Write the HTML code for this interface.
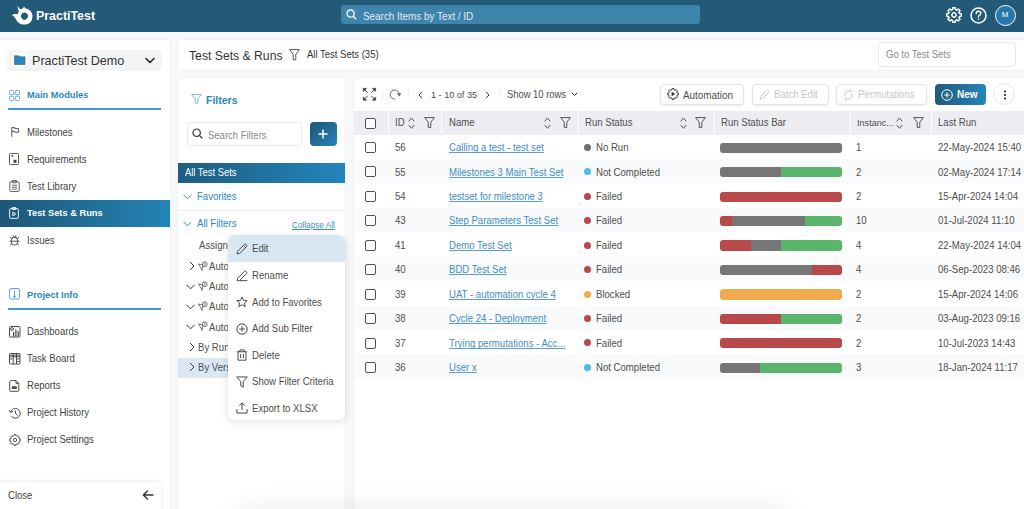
<!DOCTYPE html>
<html><head><meta charset="utf-8">
<style>
*{box-sizing:border-box;margin:0;padding:0}
html,body{width:1024px;height:509px;overflow:hidden}
body{background:#f7f8fa;font-family:"Liberation Sans",sans-serif;font-size:10.27px;color:#4e4e4e;position:relative}
.a{position:absolute}
.t{position:absolute;white-space:nowrap;line-height:12px;transform:scaleX(0.9346);transform-origin:0 50%}
svg{position:absolute;overflow:visible}
#hdr{left:0;top:0;width:1024px;height:32px;background:#235a78}
#side{left:0;top:39.5px;width:170px;height:470px;background:#fff;border-top-right-radius:4px;box-shadow:0 0 0 1px #eff1f4}
#titlecard{left:178px;top:39.5px;width:850px;height:30.5px;background:#fff;border-radius:4px;box-shadow:0 0 0 1px #eff1f4}
#fpanel{left:178px;top:78px;width:167px;height:440px;background:#fff;border-radius:4px;box-shadow:0 0 0 1px #eff1f4}
#tpanel{left:353.5px;top:77.5px;width:680px;height:440px;background:#fff;border-radius:4px;box-shadow:0 0 0 1px #eff1f4}
.nav{color:#434343;font-size:10.22px}
.blue{color:#2b86c0}
.hdrrow{left:354px;top:110.5px;width:670px;height:24px;background:#eceef2}
.sep{position:absolute;top:110.5px;width:1px;height:24px;background:#fff}
.row{position:absolute;left:354px;width:670px;height:24.5px}
.cb{position:absolute;width:11px;height:11px;border:1.4px solid #505050;border-radius:2px;background:#fff}
.link{color:#3f8ec6;text-decoration:underline;text-decoration-thickness:1px;text-underline-offset:1px;text-decoration-color:#5a9fd2;text-decoration-skip-ink:none}
.bar{position:absolute;left:720px;width:122px;height:10.2px;border-radius:3px;overflow:hidden;display:flex}
.g{background:#767676}.r{background:#b8484a}.gr{background:#5bb46c}.o{background:#f1aa4d}
.dot{position:absolute;width:7px;height:7px;border-radius:50%}
.btn{position:absolute;top:84px;height:20.6px;border:1px solid #e2e4e8;border-radius:4px;background:#fff;box-shadow:0 1px 2px rgba(0,0,0,.08)}
.menu{left:228px;top:235px;width:117px;height:185px;background:#fff;border-radius:7px;box-shadow:0 2px 8px rgba(0,0,0,.12)}
</style></head><body>

<!-- HEADER -->
<div id="hdr" class="a"></div>
<!-- logo -->
<svg style="left:8px;top:2px" width="32" height="28" viewBox="0 0 32 28">
  <path fill="#fff" fill-rule="evenodd" d="M24.5 14 A7.5 7.5 0 1 1 24.5 13.9 Z M20.1 14 A3.6 3.6 0 1 0 20.1 14.1 Z"/>
  <path fill="#fff" d="M3.8 13.3 C6 11.6 9 11.8 11 13.4 L13 16.3 C14.2 18.3 17 19.4 20 18.5 L24.2 16.5 C23.6 20.2 20.5 22.6 16 22.6 C11.5 22.6 9 19.5 7.4 16.5 C6.5 14.8 5.3 13.9 3.8 13.3 Z"/>
  <path fill="#fff" d="M9.3 4.1 L12.3 7.2 L14.8 6.6 L16 4.4 L17.5 6.8 L18.5 8 L11 10.5 Z"/>
</svg>
<div class="t" style="left:36px;top:8px;font-size:13.27px;font-weight:700;color:#fff;line-height:15px">PractiTest</div>
<!-- search -->
<div class="a" style="left:341px;top:5px;width:359px;height:19px;background:#3e84ab;border-radius:3px"></div>
<svg style="left:345.7px;top:9px" width="11" height="11" viewBox="0 0 11 11"><circle cx="4.6" cy="4.6" r="3.6" fill="none" stroke="#fff" stroke-width="1.3"/><path d="M7.2 7.2 L9.8 9.8" stroke="#fff" stroke-width="1.4" stroke-linecap="round"/></svg>
<div class="t" style="left:362.5px;top:10px;color:#e3edf4;font-size:10.59px">Search Items by Text / ID</div>
<!-- right icons -->
<svg style="left:945px;top:6px" width="18" height="18" viewBox="0 0 18 18">
  <g transform="translate(9 9) scale(0.97)" fill="none" stroke="#fff" stroke-width="1.55" stroke-linejoin="round">
   <path d="M-2.22 -5.36 L-1.50 -5.60 L-1.32 -7.48 L1.32 -7.48 L1.50 -5.60 L2.22 -5.36 L2.90 -5.02 L4.36 -6.23 L6.23 -4.36 L5.02 -2.90 L5.36 -2.22 L5.60 -1.50 L7.48 -1.32 L7.48 1.32 L5.60 1.50 L5.36 2.22 L5.02 2.90 L6.23 4.36 L4.36 6.23 L2.90 5.02 L2.22 5.36 L1.50 5.60 L1.32 7.48 L-1.32 7.48 L-1.50 5.60 L-2.22 5.36 L-2.90 5.02 L-4.36 6.23 L-6.23 4.36 L-5.02 2.90 L-5.36 2.22 L-5.60 1.50 L-7.48 1.32 L-7.48 -1.32 L-5.60 -1.50 L-5.36 -2.22 L-5.02 -2.90 L-6.23 -4.36 L-4.36 -6.23 L-2.90 -5.02 Z"/>
   <circle cx="0" cy="0" r="2.2"/>
  </g>
</svg>
<svg style="left:970px;top:6.5px" width="17" height="17" viewBox="0 0 17 17">
  <circle cx="8.5" cy="8.5" r="7.5" fill="none" stroke="#fff" stroke-width="1.6"/>
  <path d="M6.2 6.6 Q6.2 4.3 8.5 4.3 Q10.8 4.3 10.8 6.4 Q10.8 7.8 9.3 8.4 Q8.5 8.8 8.5 10" fill="none" stroke="#fff" stroke-width="1.4" stroke-linecap="round"/>
  <circle cx="8.5" cy="12.3" r="0.8" fill="#fff"/>
</svg>
<div class="a" style="left:994.5px;top:4.5px;width:21px;height:21px;border-radius:50%;background:#2777a8;border:1.8px solid #fff"></div>
<div class="a" style="left:994.5px;top:10px;width:21px;text-align:center;color:#fff;font-size:7.92px;line-height:10px;font-weight:400">M</div>

<!-- SIDEBAR -->
<div id="side" class="a"></div>
<div class="a" style="left:7.3px;top:50px;width:154.5px;height:20.5px;background:#f3f4f6;border-radius:4px"></div>
<div class="a" style="left:11.5px;top:52.2px;width:16px;height:16px;background:#fff;border-radius:50%"></div>
<svg style="left:14px;top:55px" width="11.5" height="10" viewBox="0 0 11.5 10"><path d="M0.5 0.8 L4.5 0.8 L5.5 1.8 L11 1.8 L11 9.5 L0.5 9.5 Z" fill="#2e84be" stroke="#1f5d85" stroke-width="0.6"/></svg>
<div class="t" style="left:32px;top:53px;font-size:13.48px;line-height:15px;color:#333">PractiTest Demo</div>
<svg style="left:145px;top:57.3px" width="10" height="7" viewBox="0 0 10 7"><path d="M1 1.5 L5 5.5 L9 1.5" fill="none" stroke="#222" stroke-width="1.5" stroke-linecap="round" stroke-linejoin="round"/></svg>

<!-- main modules -->
<svg style="left:8.8px;top:90px" width="11" height="11" viewBox="0 0 11 11" fill="none" stroke="#5aa3d6" stroke-width="0.9"><rect x="0.5" y="0.5" width="4.2" height="4.2" rx="0.9"/><rect x="6.3" y="0.5" width="4.2" height="4.2" rx="0.9"/><rect x="0.5" y="6.3" width="4.2" height="4.2" rx="0.9"/><rect x="6.3" y="6.3" width="4.2" height="4.2" rx="0.9"/></svg>
<div class="t blue" style="left:26.5px;top:89px;font-size:9.95px;font-weight:700">Main Modules</div>
<div class="a" style="left:8px;top:108px;width:153px;height:2px;background:#4096d0"></div>

<div id="navitems"></div>
<!-- nav items -->
<svg style="left:10.5px;top:127px" width="9" height="10" viewBox="0 0 9 10" fill="none" stroke="#444" stroke-width="0.9" stroke-linejoin="round"><path d="M0.8 9.8 V0.6 H3.8 V1.6 H7.6 V5.2 H3.8 V4.4 H0.8"/></svg>
<div class="t nav" style="left:26.5px;top:127px">Milestones</div>
<svg style="left:9px;top:153px" width="10" height="12" viewBox="0 0 10 12" fill="none" stroke="#444" stroke-width="0.9"><rect x="0.5" y="0.5" width="9" height="11" rx="1"/><rect x="2.3" y="2.2" width="2" height="1.4" fill="#444" stroke="none"/><path d="M4.5 9.8 V6.8 H7.5 V9.8 Z" fill="#444" stroke="none"/></svg>
<div class="t nav" style="left:26.5px;top:154px">Requirements</div>
<svg style="left:9px;top:180px" width="11" height="12" viewBox="0 0 11 12" fill="none" stroke="#555" stroke-width="0.9"><rect x="0.8" y="1.8" width="9.4" height="9.7" rx="1.2"/><rect x="3.3" y="0.5" width="4.4" height="2.3" rx="0.6"/><path d="M2.8 5.2 H8.2 M2.8 7.2 H8.2 M2.8 9.2 H8.2"/></svg>
<div class="t nav" style="left:26.5px;top:181px">Test Library</div>

<!-- active -->
<div class="a" style="left:0;top:199.5px;width:170px;height:27px;background:linear-gradient(90deg,#1e5778 0%,#2583b6 100%)"></div>
<svg style="left:9px;top:207px" width="10" height="12" viewBox="0 0 10 12" fill="none" stroke="#fff" stroke-width="0.9"><rect x="0.6" y="1.6" width="8.8" height="9.8" rx="1.2"/><rect x="3" y="0.5" width="4" height="2" rx="0.5"/><path d="M3.8 5.2 L6.8 7 L3.8 8.8 Z"/></svg>
<div class="t" style="left:26.5px;top:207px;color:#fff;font-weight:700;font-size:9.95px">Test Sets &amp; Runs</div>

<svg style="left:9px;top:234px" width="11" height="12" viewBox="0 0 11 12" fill="none" stroke="#444" stroke-width="0.9"><ellipse cx="5.5" cy="7.2" rx="3.3" ry="4"/><path d="M3.2 3.8 Q5.5 1.8 7.8 3.8 M2.2 7.2 H0.5 M8.8 7.2 H10.5 M2.5 4.5 L0.8 3 M8.5 4.5 L10.2 3 M2.5 10 L0.8 11.3 M8.5 10 L10.2 11.3 M4 1.2 L4.6 2.6 M7 1.2 L6.4 2.6 M2.2 7.2 H8.8"/></svg>
<div class="t nav" style="left:26.5px;top:235px">Issues</div>

<!-- project info -->
<svg style="left:9.2px;top:288px" width="11" height="11.5" viewBox="0 0 11 11.5" fill="none" stroke="#5aa3d6" stroke-width="0.95"><rect x="0.5" y="0.5" width="10" height="10.5" rx="1.5"/><path d="M5.5 2.6 V7.6" stroke-width="1"/><circle cx="5.5" cy="8.6" r="0.9" fill="#5aa3d6"/></svg>
<div class="t blue" style="left:26.5px;top:288.5px;font-size:9.95px;font-weight:700">Project Info</div>
<div class="a" style="left:8px;top:307.5px;width:153px;height:2px;background:#4096d0"></div>

<svg style="left:8.8px;top:325.8px" width="11.5" height="11.5" viewBox="0 0 11.5 11.5" fill="none" stroke="#444" stroke-width="0.95"><rect x="0.5" y="0.5" width="10.5" height="10.5" rx="1"/><circle cx="3" cy="3" r="1.4"/><path d="M4.6 10.5 V6 M6.9 10.5 V3.6 M9.2 10.5 V5" stroke-width="1.2"/></svg>
<div class="t nav" style="left:26.5px;top:325.5px">Dashboards</div>
<svg style="left:8.8px;top:353px" width="11.5" height="11.5" viewBox="0 0 11.5 11.5" fill="none" stroke="#444" stroke-width="0.95"><rect x="0.5" y="0.5" width="10.5" height="10.5" rx="1"/><path d="M0.5 2.2 H11 M0.5 3.8 H11 M4.2 0.5 V11 M7.5 0.5 V11 M8.2 6 H10.4 M8.2 8.5 H10.4 M1.2 6 H3.4" /></svg>
<div class="t nav" style="left:26.5px;top:352.5px">Task Board</div>
<svg style="left:9.3px;top:379.8px" width="11" height="12" viewBox="0 0 11 12" fill="none" stroke="#444" stroke-width="0.95" stroke-linejoin="round"><path d="M1.6 0.6 H7 L9.8 3.4 V10.4 Q9.8 11.3 8.9 11.3 H1.6 Q0.7 11.3 0.7 10.4 V1.5 Q0.7 0.6 1.6 0.6 Z"/><path d="M7 0.6 V3.4 H9.8"/><rect x="2.8" y="6.2" width="5" height="2.8" fill="#555" stroke="none"/></svg>
<div class="t nav" style="left:26.5px;top:379.5px">Reports</div>
<svg style="left:8.8px;top:407.6px" width="12" height="11" viewBox="0 0 12 11" fill="none" stroke="#444" stroke-width="0.95" stroke-linecap="round"><path d="M1.6 4 A4.9 4.9 0 1 1 2.4 8.3"/><path d="M0.4 2.4 L1.5 4.3 L3.5 3.5" stroke-linejoin="round"/><path d="M6.5 2.8 V5.6 L8.4 7.2"/></svg>
<div class="t nav" style="left:26.5px;top:406.5px">Project History</div>
<svg style="left:9px;top:433.5px" width="12" height="12" viewBox="0 0 12 12"><g transform="translate(6 6) scale(0.72)" fill="none" stroke="#444" stroke-width="1.25" stroke-linejoin="round"><path d="M-2.22 -5.36 L-1.50 -5.60 L-1.32 -7.48 L1.32 -7.48 L1.50 -5.60 L2.22 -5.36 L2.90 -5.02 L4.36 -6.23 L6.23 -4.36 L5.02 -2.90 L5.36 -2.22 L5.60 -1.50 L7.48 -1.32 L7.48 1.32 L5.60 1.50 L5.36 2.22 L5.02 2.90 L6.23 4.36 L4.36 6.23 L2.90 5.02 L2.22 5.36 L1.50 5.60 L1.32 7.48 L-1.32 7.48 L-1.50 5.60 L-2.22 5.36 L-2.90 5.02 L-4.36 6.23 L-6.23 4.36 L-5.02 2.90 L-5.36 2.22 L-5.60 1.50 L-7.48 1.32 L-7.48 -1.32 L-5.60 -1.50 L-5.36 -2.22 L-5.02 -2.90 L-6.23 -4.36 L-4.36 -6.23 L-2.90 -5.02 Z"/><circle r="2.3"/></g></svg>
<div class="t nav" style="left:26.5px;top:433.5px">Project Settings</div>

<!-- close -->
<div class="a" style="left:-5px;top:482px;width:166px;height:35px;background:#fff;border-radius:5px;box-shadow:0 0 4px rgba(0,0,0,.12)"></div>
<div class="t nav" style="left:8px;top:490px">Close</div>
<svg style="left:141.5px;top:489.5px" width="12" height="10" viewBox="0 0 12 10" fill="none" stroke="#333" stroke-width="1.4" stroke-linecap="round" stroke-linejoin="round"><path d="M11 5 H1.5 M5.5 1 L1.3 5 L5.5 9"/></svg>

<!-- TITLE CARD -->
<div id="titlecard" class="a"></div>
<div class="t" style="left:188.5px;top:47.5px;font-size:13.05px;line-height:15px;color:#333">Test Sets &amp; Runs</div>
<svg style="left:289px;top:48.6px" width="11" height="11.5" viewBox="0 0 11 11.5" fill="none" stroke="#4a4a4a" stroke-width="0.95" stroke-linejoin="round"><path d="M0.5 0.6 H10.5 L6.8 5.3 V10.8 H4.2 V5.3 Z"/></svg>
<div class="t" style="left:307px;top:49px;font-size:10.17px;color:#333">All Test Sets (35)</div>
<div class="a" style="left:877.5px;top:42px;width:138px;height:24.5px;background:#fff;border:1px solid #e6e8ec;border-radius:4px"></div>
<div class="t" style="left:885.5px;top:49px;font-size:10.17px;color:#8a8a8a">Go to Test Sets</div>

<!-- FILTER PANEL -->
<div id="fpanel" class="a"></div>
<svg style="left:191px;top:93.5px" width="11" height="10.5" viewBox="0 0 11 10.5" fill="none" stroke="#62a9db" stroke-width="0.85" stroke-linejoin="round"><path d="M0.5 0.6 H10.5 L6.8 4.8 V9.1 H4.2 V4.8 Z"/></svg>
<div class="t blue" style="left:206px;top:93.5px;font-size:11.24px;font-weight:700">Filters</div>
<div class="a" style="left:186.5px;top:122px;width:115px;height:24px;background:#fff;border:1px solid #e8eaee;border-radius:4px"></div>
<svg style="left:192px;top:128px" width="11" height="11" viewBox="0 0 11 11"><circle cx="4.7" cy="4.7" r="3.7" fill="none" stroke="#333" stroke-width="1.2"/><path d="M7.4 7.4 L10 10" stroke="#333" stroke-width="1.3" stroke-linecap="round"/></svg>
<div class="t" style="left:208px;top:129.5px;font-size:10.17px;color:#8a8a8a">Search Filters</div>
<div class="a" style="left:309.5px;top:122px;width:27.5px;height:24px;border-radius:4px;background:linear-gradient(135deg,#1d5676,#2683b6)"></div>
<svg style="left:318px;top:128.5px" width="10" height="10" viewBox="0 0 10 10" stroke="#fff" stroke-width="1.5" stroke-linecap="round"><path d="M5 1 V9 M1 5 H9"/></svg>

<div class="a" style="left:178px;top:162.5px;width:167px;height:20.5px;background:linear-gradient(90deg,#1e5d82 0%,#2385ba 100%)"></div>
<div class="t" style="left:185px;top:167.3px;color:#fff;font-size:10.06px">All Test Sets</div>
<svg style="left:183px;top:193.5px" width="9" height="6" viewBox="0 0 9 6" fill="none" stroke="#3a8ec6" stroke-width="1"><path d="M0.5 0.8 L4.5 4.8 L8.5 0.8"/></svg>
<div class="t blue" style="left:197px;top:190.5px;font-size:10.27px">Favorites</div>
<div class="a" style="left:178px;top:210px;width:167px;height:1px;background:#eceef2"></div>
<svg style="left:183px;top:221px" width="9" height="6" viewBox="0 0 9 6" fill="none" stroke="#3a8ec6" stroke-width="1"><path d="M0.5 0.8 L4.5 4.8 L8.5 0.8"/></svg>
<div class="t blue" style="left:197px;top:218px;font-size:10.27px">All Filters</div>
<div class="t" style="left:292px;top:219px;font-size:8.77px;color:#3a8ec6;text-decoration:underline">Collapse All</div>

<!-- tree -->
<div class="t" style="left:198.5px;top:239.5px">Assigned</div>
<div class="a" style="left:178px;top:357.5px;width:60px;height:20.5px;background:#d9e8f3"></div>
<svg style="left:188.5px;top:261.3px" width="6" height="10" viewBox="0 0 6 10" fill="none" stroke="#333" stroke-width="1"><path d="M1 1 L5 5 L1 9"/></svg>
<svg style="left:197.5px;top:260.8px" width="10" height="10" viewBox="0 0 10 10" fill="none" stroke="#555" stroke-width="0.8"><path d="M0.5 3 L5 4 L4 9.5 L3 7 Z"/><circle cx="6.8" cy="3.2" r="2.4"/><path d="M6 2.2 H7.6 M6 3.8 H7.6"/></svg>
<div class="t" style="left:208.5px;top:261.0px">Automation</div>
<svg style="left:185.5px;top:284.1px" width="9" height="6" viewBox="0 0 9 6" fill="none" stroke="#333" stroke-width="1"><path d="M0.5 0.8 L4.5 4.8 L8.5 0.8"/></svg>
<svg style="left:197.5px;top:281.1px" width="10" height="10" viewBox="0 0 10 10" fill="none" stroke="#555" stroke-width="0.8"><path d="M0.5 3 L5 4 L4 9.5 L3 7 Z"/><circle cx="6.8" cy="3.2" r="2.4"/><path d="M6 2.2 H7.6 M6 3.8 H7.6"/></svg>
<div class="t" style="left:208.5px;top:281.3px">Automation</div>
<svg style="left:185.5px;top:304.1px" width="9" height="6" viewBox="0 0 9 6" fill="none" stroke="#333" stroke-width="1"><path d="M0.5 0.8 L4.5 4.8 L8.5 0.8"/></svg>
<svg style="left:197.5px;top:301.1px" width="10" height="10" viewBox="0 0 10 10" fill="none" stroke="#555" stroke-width="0.8"><path d="M0.5 3 L5 4 L4 9.5 L3 7 Z"/><circle cx="6.8" cy="3.2" r="2.4"/><path d="M6 2.2 H7.6 M6 3.8 H7.6"/></svg>
<div class="t" style="left:208.5px;top:301.3px">Automation</div>
<svg style="left:185.5px;top:324.3px" width="9" height="6" viewBox="0 0 9 6" fill="none" stroke="#333" stroke-width="1"><path d="M0.5 0.8 L4.5 4.8 L8.5 0.8"/></svg>
<svg style="left:197.5px;top:321.3px" width="10" height="10" viewBox="0 0 10 10" fill="none" stroke="#555" stroke-width="0.8"><path d="M0.5 3 L5 4 L4 9.5 L3 7 Z"/><circle cx="6.8" cy="3.2" r="2.4"/><path d="M6 2.2 H7.6 M6 3.8 H7.6"/></svg>
<div class="t" style="left:208.5px;top:321.5px">Automation</div>
<svg style="left:188.5px;top:342.2px" width="6" height="10" viewBox="0 0 6 10" fill="none" stroke="#333" stroke-width="1"><path d="M1 1 L5 5 L1 9"/></svg>
<div class="t" style="left:197.5px;top:341.9px">By Run</div>
<svg style="left:188.5px;top:362.4px" width="6" height="10" viewBox="0 0 6 10" fill="none" stroke="#333" stroke-width="1"><path d="M1 1 L5 5 L1 9"/></svg>
<div class="t" style="left:197.5px;top:362.1px">By Version</div>

<!-- TABLE PANEL -->
<div id="tpanel" class="a"></div>

<svg style="left:363px;top:88px" width="13" height="12.5" viewBox="0 0 13 12.5" stroke="#333" stroke-width="0.9" fill="#333"><path d="M0.3 0.3 H3.6 L0.3 3.6 Z M12.7 0.3 H9.4 L12.7 3.6 Z M0.3 12.2 H3.6 L0.3 8.9 Z M12.7 12.2 H9.4 L12.7 8.9 Z" stroke-width="0.5" stroke-linejoin="round"/><path d="M1.5 1.5 L4.6 4.6 M11.5 1.5 L8.4 4.6 M1.5 11 L4.6 7.9 M11.5 11 L8.4 7.9" fill="none"/></svg>
<div class="a" style="left:382px;top:89px;width:1px;height:10px;background:#f0f1f4"></div>
<svg style="left:389px;top:88.5px" width="12" height="11.5" viewBox="0 0 12 11.5" fill="none" stroke="#666" stroke-width="0.95" stroke-linecap="round"><path d="M5.8 10.2 A4.6 4.6 0 1 1 10.4 5.4"/><path d="M8.7 4.6 L11.9 4.6 L10.3 6.9 Z" fill="#666" stroke-width="0.6" stroke-linejoin="round"/></svg>
<div class="a" style="left:407.5px;top:89px;width:1px;height:10px;background:#f0f1f4"></div>
<svg style="left:418px;top:90.5px" width="5" height="8" viewBox="0 0 5 8" fill="none" stroke="#333" stroke-width="1"><path d="M4 0.8 L1 4 L4 7.2"/></svg>
<div class="t" style="left:430.5px;top:88.5px;font-size:9.74px">1 - 10 of 35</div>
<svg style="left:484.5px;top:90.5px" width="5" height="8" viewBox="0 0 5 8" fill="none" stroke="#333" stroke-width="1"><path d="M1 0.8 L4 4 L1 7.2"/></svg>
<div class="a" style="left:499.5px;top:89px;width:1px;height:10px;background:#f0f1f4"></div>
<div class="t" style="left:506.5px;top:88.5px;font-size:10.06px">Show 10 rows</div>
<svg style="left:570.5px;top:92px" width="7" height="5" viewBox="0 0 7 5" fill="none" stroke="#333" stroke-width="1"><path d="M0.8 0.8 L3.5 3.5 L6.2 0.8"/></svg>

<div class="btn" style="left:659.5px;width:84px"></div>
<svg style="left:666.5px;top:88px" width="12" height="12" viewBox="0 0 12 12"><g transform="translate(6 6) scale(0.72)" fill="none" stroke="#333" stroke-width="1.35" stroke-linejoin="round"><path d="M-2.22 -5.36 L-1.50 -5.60 L-1.32 -7.48 L1.32 -7.48 L1.50 -5.60 L2.22 -5.36 L2.90 -5.02 L4.36 -6.23 L6.23 -4.36 L5.02 -2.90 L5.36 -2.22 L5.60 -1.50 L7.48 -1.32 L7.48 1.32 L5.60 1.50 L5.36 2.22 L5.02 2.90 L6.23 4.36 L4.36 6.23 L2.90 5.02 L2.22 5.36 L1.50 5.60 L1.32 7.48 L-1.32 7.48 L-1.50 5.60 L-2.22 5.36 L-2.90 5.02 L-4.36 6.23 L-6.23 4.36 L-5.02 2.90 L-5.36 2.22 L-5.60 1.50 L-7.48 1.32 L-7.48 -1.32 L-5.60 -1.50 L-5.36 -2.22 L-5.02 -2.90 L-6.23 -4.36 L-4.36 -6.23 L-2.90 -5.02 Z"/><path d="M-1.5 -2.4 L2.5 0 L-1.5 2.4 Z" fill="#333" stroke-width="0.8"/></g></svg>
<div class="t" style="left:683px;top:88.5px;font-size:10.59px">Automation</div>

<div class="btn" style="left:751.5px;width:77px;border-color:#e2e4e8"></div>
<svg style="left:759px;top:89px" width="11" height="11" viewBox="0 0 11 11" fill="none" stroke="#c9cbcf" stroke-width="1"><path d="M1 10 L1.5 7.5 L7.8 1.2 Q8.6 0.6 9.4 1.4 L9.6 1.6 Q10.4 2.4 9.8 3.2 L3.5 9.5 Z"/></svg>
<div class="t" style="left:774px;top:88.5px;font-size:10.27px;color:#c5c7cb">Batch Edit</div>

<div class="btn" style="left:836px;width:90.5px;border-color:#e2e4e8"></div>
<svg style="left:843px;top:88.5px" width="11" height="12" viewBox="0 0 11 12" fill="none" stroke="#c9cbcf" stroke-width="1" stroke-linecap="round"><path d="M2 4 Q2.5 2 5 2 H9 M7.5 0.5 L9 2 L7.5 3.5 M9 8 Q8.5 10 6 10 H2 M3.5 11.5 L2 10 L3.5 8.5 M2 4 V7 M9 5 V8"/></svg>
<div class="t" style="left:858px;top:88.5px;font-size:10.27px;color:#c5c7cb">Permutations</div>

<div class="a" style="left:935px;top:84px;width:50.5px;height:20.5px;border-radius:4px;background:linear-gradient(90deg,#1f5a7b,#2586ba)"></div>
<svg style="left:940.5px;top:88.5px" width="12" height="12" viewBox="0 0 12 12" fill="none" stroke="#fff" stroke-width="1"><circle cx="6" cy="6" r="5.3"/><path d="M6 3.2 V8.8 M3.2 6 H8.8"/></svg>
<div class="t" style="left:956.5px;top:88px;font-size:10.70px;font-weight:700;color:#fff">New</div>

<div class="a" style="left:993.3px;top:83px;width:22px;height:22px;border-radius:50%;background:#fff;border:1px solid #e6e8ec"></div>
<svg style="left:1002.5px;top:89.5px" width="4" height="10" viewBox="0 0 4 10" fill="#222"><circle cx="2" cy="1.5" r="1.1"/><circle cx="2" cy="5" r="1.1"/><circle cx="2" cy="8.5" r="1.1"/></svg>

<div class="a hdrrow"></div>
<div class="sep" style="left:387.5px"></div>
<div class="sep" style="left:441px"></div>
<div class="sep" style="left:577.5px"></div>
<div class="sep" style="left:713.5px"></div>
<div class="sep" style="left:849.5px"></div>
<div class="sep" style="left:930.5px"></div>
<div class="cb" style="left:365px;top:117.5px"></div>
<div class="t" style="left:394.5px;top:116.5px">ID</div>
<svg style="left:408px;top:116.5px" width="7" height="12" viewBox="0 0 7 12" fill="none" stroke="#444" stroke-width="0.95" stroke-linecap="round" stroke-linejoin="round"><path d="M1 4.0 L3.5 1.0 L6 4.0 M1 8.3 L3.5 11.3 L6 8.3"/></svg>
<svg style="left:424px;top:117px" width="11" height="11" viewBox="0 0 11 11" fill="none" stroke="#4a4a4a" stroke-width="0.95" stroke-linejoin="round"><path d="M0.6 0.6 H10.4 L6.8 5.2 V10.4 H4.2 V5.2 Z"/></svg>
<div class="t" style="left:449px;top:116.5px">Name</div>
<svg style="left:543.5px;top:116.5px" width="7" height="12" viewBox="0 0 7 12" fill="none" stroke="#444" stroke-width="0.95" stroke-linecap="round" stroke-linejoin="round"><path d="M1 4.0 L3.5 1.0 L6 4.0 M1 8.3 L3.5 11.3 L6 8.3"/></svg>
<svg style="left:559.5px;top:117px" width="11" height="11" viewBox="0 0 11 11" fill="none" stroke="#4a4a4a" stroke-width="0.95" stroke-linejoin="round"><path d="M0.6 0.6 H10.4 L6.8 5.2 V10.4 H4.2 V5.2 Z"/></svg>
<div class="t" style="left:585px;top:116.5px">Run Status</div>
<svg style="left:679.5px;top:116.5px" width="7" height="12" viewBox="0 0 7 12" fill="none" stroke="#444" stroke-width="0.95" stroke-linecap="round" stroke-linejoin="round"><path d="M1 4.0 L3.5 1.0 L6 4.0 M1 8.3 L3.5 11.3 L6 8.3"/></svg>
<svg style="left:695px;top:117px" width="11" height="11" viewBox="0 0 11 11" fill="none" stroke="#4a4a4a" stroke-width="0.95" stroke-linejoin="round"><path d="M0.6 0.6 H10.4 L6.8 5.2 V10.4 H4.2 V5.2 Z"/></svg>
<div class="t" style="left:721px;top:116.5px">Run Status Bar</div>
<div class="t" style="left:856.5px;top:116.5px;font-size:9.74px">Instanc...</div>
<svg style="left:896px;top:116.5px" width="7" height="12" viewBox="0 0 7 12" fill="none" stroke="#444" stroke-width="0.95" stroke-linecap="round" stroke-linejoin="round"><path d="M1 4.0 L3.5 1.0 L6 4.0 M1 8.3 L3.5 11.3 L6 8.3"/></svg>
<svg style="left:913px;top:117px" width="11" height="11" viewBox="0 0 11 11" fill="none" stroke="#4a4a4a" stroke-width="0.95" stroke-linejoin="round"><path d="M0.6 0.6 H10.4 L6.8 5.2 V10.4 H4.2 V5.2 Z"/></svg>
<div class="t" style="left:938px;top:116.5px">Last Run</div>
<div class="row" style="top:134.50px;height:24.5px;background:#fff"></div>
<div class="cb" style="left:365px;top:142.02px"></div>
<div class="t" style="left:394.5px;top:142.12px">56</div>
<div class="t link" style="left:448.5px;top:142.12px">Calling a test - test set</div>
<div class="dot" style="left:584.3px;top:143.92px;background:#6f6f6f"></div>
<div class="t" style="left:595.5px;top:142.12px">No Run</div>
<div class="bar" style="top:142.72px"><div class="g" style="width:100%"></div></div>
<div class="t" style="left:856px;top:142.12px">1</div>
<div class="t" style="left:938px;top:142.12px">22-May-2024 15:40</div>
<div class="row" style="top:158.94px;height:24.5px;background:#f9fafb"></div>
<div class="cb" style="left:365px;top:166.46px"></div>
<div class="t" style="left:394.5px;top:166.56px">55</div>
<div class="t link" style="left:448.5px;top:166.56px">Milestones 3 Main Test Set</div>
<div class="dot" style="left:584.3px;top:168.36px;background:#52b9e4"></div>
<div class="t" style="left:595.5px;top:166.56px">Not Completed</div>
<div class="bar" style="top:167.16px"><div class="g" style="width:50%"></div><div class="gr" style="width:50%"></div></div>
<div class="t" style="left:856px;top:166.56px">2</div>
<div class="t" style="left:938px;top:166.56px">02-May-2024 17:14</div>
<div class="row" style="top:183.38px;height:24.5px;background:#fff"></div>
<div class="cb" style="left:365px;top:190.9px"></div>
<div class="t" style="left:394.5px;top:191.0px">54</div>
<div class="t link" style="left:448.5px;top:191.0px">testset for milestone 3</div>
<div class="dot" style="left:584.3px;top:192.80px;background:#b8484a"></div>
<div class="t" style="left:595.5px;top:191.0px">Failed</div>
<div class="bar" style="top:191.60px"><div class="r" style="width:100%"></div></div>
<div class="t" style="left:856px;top:191.0px">2</div>
<div class="t" style="left:938px;top:191.0px">15-Apr-2024 14:04</div>
<div class="row" style="top:207.82px;height:24.5px;background:#f9fafb"></div>
<div class="cb" style="left:365px;top:215.34px"></div>
<div class="t" style="left:394.5px;top:215.44px">43</div>
<div class="t link" style="left:448.5px;top:215.44px">Step Parameters Test Set</div>
<div class="dot" style="left:584.3px;top:217.24px;background:#b8484a"></div>
<div class="t" style="left:595.5px;top:215.44px">Failed</div>
<div class="bar" style="top:216.04px"><div class="r" style="width:10%"></div><div class="g" style="width:60%"></div><div class="gr" style="width:30%"></div></div>
<div class="t" style="left:856px;top:215.44px">10</div>
<div class="t" style="left:938px;top:215.44px">01-Jul-2024 11:10</div>
<div class="row" style="top:232.26px;height:24.5px;background:#fff"></div>
<div class="cb" style="left:365px;top:239.78px"></div>
<div class="t" style="left:394.5px;top:239.88px">41</div>
<div class="t link" style="left:448.5px;top:239.88px">Demo Test Set</div>
<div class="dot" style="left:584.3px;top:241.68px;background:#b8484a"></div>
<div class="t" style="left:595.5px;top:239.88px">Failed</div>
<div class="bar" style="top:240.48px"><div class="r" style="width:25%"></div><div class="g" style="width:25%"></div><div class="gr" style="width:50%"></div></div>
<div class="t" style="left:856px;top:239.88px">4</div>
<div class="t" style="left:938px;top:239.88px">22-May-2024 14:04</div>
<div class="row" style="top:256.70px;height:24.5px;background:#f9fafb"></div>
<div class="cb" style="left:365px;top:264.22px"></div>
<div class="t" style="left:394.5px;top:264.32px">40</div>
<div class="t link" style="left:448.5px;top:264.32px">BDD Test Set</div>
<div class="dot" style="left:584.3px;top:266.12px;background:#b8484a"></div>
<div class="t" style="left:595.5px;top:264.32px">Failed</div>
<div class="bar" style="top:264.92px"><div class="g" style="width:75%"></div><div class="r" style="width:25%"></div></div>
<div class="t" style="left:856px;top:264.32px">4</div>
<div class="t" style="left:938px;top:264.32px">06-Sep-2023 08:46</div>
<div class="row" style="top:281.14px;height:24.5px;background:#fff"></div>
<div class="cb" style="left:365px;top:288.66px"></div>
<div class="t" style="left:394.5px;top:288.76px">39</div>
<div class="t link" style="left:448.5px;top:288.76px">UAT - automation cycle 4</div>
<div class="dot" style="left:584.3px;top:290.56px;background:#f1aa4d"></div>
<div class="t" style="left:595.5px;top:288.76px">Blocked</div>
<div class="bar" style="top:289.36px"><div class="o" style="width:100%"></div></div>
<div class="t" style="left:856px;top:288.76px">2</div>
<div class="t" style="left:938px;top:288.76px">15-Apr-2024 14:06</div>
<div class="row" style="top:305.58px;height:24.5px;background:#f9fafb"></div>
<div class="cb" style="left:365px;top:313.1px"></div>
<div class="t" style="left:394.5px;top:313.2px">38</div>
<div class="t link" style="left:448.5px;top:313.2px">Cycle 24 - Deployment</div>
<div class="dot" style="left:584.3px;top:315.00px;background:#b8484a"></div>
<div class="t" style="left:595.5px;top:313.2px">Failed</div>
<div class="bar" style="top:313.80px"><div class="r" style="width:50%"></div><div class="gr" style="width:50%"></div></div>
<div class="t" style="left:856px;top:313.2px">2</div>
<div class="t" style="left:938px;top:313.2px">03-Aug-2023 09:16</div>
<div class="row" style="top:330.02px;height:24.5px;background:#fff"></div>
<div class="cb" style="left:365px;top:337.54px"></div>
<div class="t" style="left:394.5px;top:337.64px">37</div>
<div class="t link" style="left:448.5px;top:337.64px">Trying permutations - Acc...</div>
<div class="dot" style="left:584.3px;top:339.44px;background:#b8484a"></div>
<div class="t" style="left:595.5px;top:337.64px">Failed</div>
<div class="bar" style="top:338.24px"><div class="r" style="width:100%"></div></div>
<div class="t" style="left:856px;top:337.64px">2</div>
<div class="t" style="left:938px;top:337.64px">10-Jul-2023 14:43</div>
<div class="row" style="top:354.46px;height:24.5px;background:#f9fafb"></div>
<div class="cb" style="left:365px;top:361.98px"></div>
<div class="t" style="left:394.5px;top:362.08px">36</div>
<div class="t link" style="left:448.5px;top:362.08px">User x</div>
<div class="dot" style="left:584.3px;top:363.88px;background:#52b9e4"></div>
<div class="t" style="left:595.5px;top:362.08px">Not Completed</div>
<div class="bar" style="top:362.68px"><div class="g" style="width:33%"></div><div class="gr" style="width:67%"></div></div>
<div class="t" style="left:856px;top:362.08px">3</div>
<div class="t" style="left:938px;top:362.08px">18-Jan-2024 11:17</div>

<div class="a" style="left:235px;top:514px;width:560px;height:60px;border-radius:30px;background:#eee;box-shadow:0 0 26px 8px rgba(0,0,0,.075)"></div>
<!-- CONTEXT MENU -->
<div class="a menu"></div>
<div class="a" style="left:228px;top:235px;width:117px;height:27px;background:#d8e7f2;border-radius:7px 7px 0 0"></div>
<svg style="left:235.5px;top:242.9px;transform:scale(1.08)" width="12" height="12" viewBox="-0.5 -0.5 12 12" fill="none" stroke="#444" stroke-width="0.9"><path d="M1 10 L1.5 7.5 L7.8 1.2 Q8.6 0.6 9.4 1.4 L9.6 1.6 Q10.4 2.4 9.8 3.2 L3.5 9.5 Z M6.8 2.2 L8.8 4.2"/></svg>
<div class="t" style="left:251.5px;top:243.2px">Edit</div>
<svg style="left:235.5px;top:269.6px;transform:scale(1.08)" width="12" height="12" viewBox="-0.5 -0.5 12 12" fill="none" stroke="#444" stroke-width="0.9"><path d="M1 10 L1.5 7.5 L7.8 1.2 Q8.6 0.6 9.4 1.4 L9.6 1.6 Q10.4 2.4 9.8 3.2 L3.5 9.5 Z M3.5 9.8 H10.5"/></svg>
<div class="t" style="left:251.5px;top:269.9px">Rename</div>
<svg style="left:235.5px;top:296.3px;transform:scale(1.08)" width="12" height="12" viewBox="-0.5 -0.5 12 12" fill="none" stroke="#444" stroke-width="0.9"><path d="M5.5 0.8 L6.9 3.9 L10.3 4.2 L7.7 6.4 L8.5 9.8 L5.5 8 L2.5 9.8 L3.3 6.4 L0.7 4.2 L4.1 3.9 Z" stroke-linejoin="round"/></svg>
<div class="t" style="left:251.5px;top:296.6px">Add to Favorites</div>
<svg style="left:235.5px;top:322.7px;transform:scale(1.08)" width="12" height="12" viewBox="-0.5 -0.5 12 12" fill="none" stroke="#444" stroke-width="0.9"><circle cx="5.5" cy="5.5" r="4.8"/><path d="M5.5 3 V8 M3 5.5 H8"/></svg>
<div class="t" style="left:251.5px;top:323.0px">Add Sub Filter</div>
<svg style="left:235.5px;top:349.2px;transform:scale(1.08)" width="12" height="12" viewBox="-0.5 -0.5 12 12" fill="none" stroke="#444" stroke-width="0.9"><path d="M0.8 2.5 H10.2 M3.5 2.5 V0.8 H7.5 V2.5 M1.8 2.5 V10.3 H9.2 V2.5 M4.2 4.5 V8.3 M6.8 4.5 V8.3"/></svg>
<div class="t" style="left:251.5px;top:349.5px">Delete</div>
<svg style="left:235.5px;top:375.7px;transform:scale(1.08)" width="12" height="12" viewBox="-0.5 -0.5 12 12" fill="none" stroke="#444" stroke-width="0.9"><path d="M0.6 0.8 H10.4 L6.6 5.2 V10.2 L4.4 9 V5.2 Z" stroke-linejoin="round"/></svg>
<div class="t" style="left:251.5px;top:376.0px">Show Filter Criteria</div>
<svg style="left:235.5px;top:402.2px;transform:scale(1.08)" width="12" height="12" viewBox="-0.5 -0.5 12 12" fill="none" stroke="#444" stroke-width="0.9"><path d="M0.8 6.5 V10.2 H10.2 V6.5 M5.5 7.5 V0.8 M3 3.2 L5.5 0.8 L8 3.2"/></svg>
<div class="t" style="left:251.5px;top:402.5px">Export to XLSX</div>

</body></html>
